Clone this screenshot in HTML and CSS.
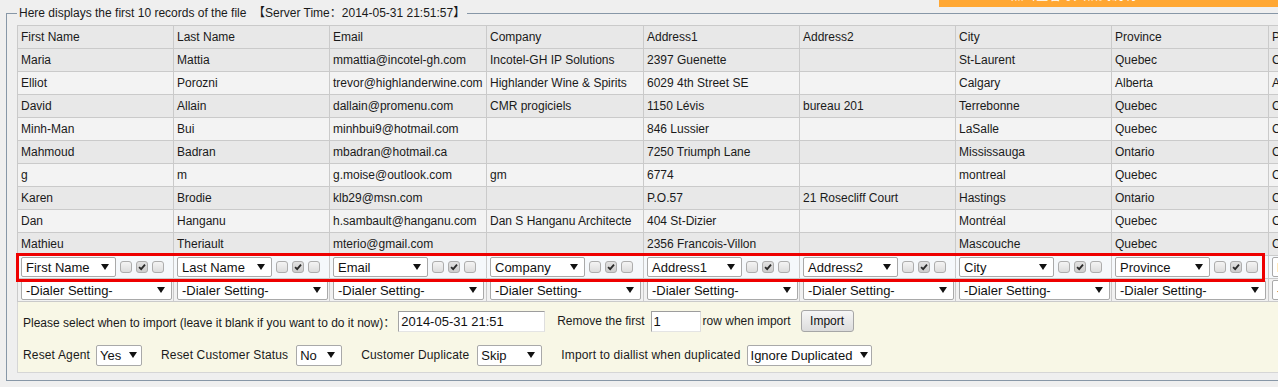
FILE: index.html
```html
<!DOCTYPE html>
<html lang="en">
  <head>
    <meta charset="UTF-8" />
    <title>Import Preview</title>
    <link rel="stylesheet" href="styles.css">
  </head>
  <body>
    <div class="help-tab"><span>点击查看导入格式说明</span></div>

    <fieldset class="preview">
      <legend>Here displays the first 10 records of the file &nbsp;【Server Time：2014-05-31 21:51:57】</legend>

      <table class="records">
        <colgroup>
          <col style="width: 156px"><col style="width: 156px"><col style="width: 157px">
          <col style="width: 157px"><col style="width: 156px"><col style="width: 156px">
          <col style="width: 156px"><col style="width: 157px"><col style="width: 157px">
        </colgroup>
        <tr class="head">
          <td>First Name</td><td>Last Name</td><td>Email</td><td>Company</td><td>Address1</td>
          <td>Address2</td><td>City</td><td>Province</td><td>Postal Code</td>
        </tr>
        <tr>
          <td>Maria</td><td>Mattia</td><td>mmattia@incotel-gh.com</td><td>Incotel-GH IP Solutions</td>
          <td>2397 Guenette</td><td></td><td>St-Laurent</td><td>Quebec</td><td>Canada</td>
        </tr>
        <tr>
          <td>Elliot</td><td>Porozni</td><td>trevor@highlanderwine.com</td><td>Highlander Wine &amp; Spirits</td>
          <td>6029 4th Street SE</td><td></td><td>Calgary</td><td>Alberta</td><td>AB</td>
        </tr>
        <tr>
          <td>David</td><td>Allain</td><td>dallain@promenu.com</td><td>CMR progiciels</td>
          <td>1150 Lévis</td><td>bureau 201</td><td>Terrebonne</td><td>Quebec</td><td>Canada</td>
        </tr>
        <tr>
          <td>Minh-Man</td><td>Bui</td><td>minhbui9@hotmail.com</td><td></td>
          <td>846 Lussier</td><td></td><td>LaSalle</td><td>Quebec</td><td>Canada</td>
        </tr>
        <tr>
          <td>Mahmoud</td><td>Badran</td><td>mbadran@hotmail.ca</td><td></td>
          <td>7250 Triumph Lane</td><td></td><td>Mississauga</td><td>Ontario</td><td>Canada</td>
        </tr>
        <tr>
          <td>g</td><td>m</td><td>g.moise@outlook.com</td><td>gm</td>
          <td>6774</td><td></td><td>montreal</td><td>Quebec</td><td>Canada</td>
        </tr>
        <tr>
          <td>Karen</td><td>Brodie</td><td>klb29@msn.com</td><td></td>
          <td>P.O.57</td><td>21 Rosecliff Court</td><td>Hastings</td><td>Ontario</td><td>Canada</td>
        </tr>
        <tr>
          <td>Dan</td><td>Hanganu</td><td>h.sambault@hanganu.com</td><td>Dan S Hanganu Architecte</td>
          <td>404 St-Dizier</td><td></td><td>Montréal</td><td>Quebec</td><td>Canada</td>
        </tr>
        <tr>
          <td>Mathieu</td><td>Theriault</td><td>mterio@gmail.com</td><td></td>
          <td>2356 Francois-Villon</td><td></td><td>Mascouche</td><td>Quebec</td><td>Canada</td>
        </tr>

        <tr class="mapping">
          <td><div class="map"><span class="sel">First Name</span><span class="chk"></span><span class="chk on"><svg viewBox="0 0 12 12"><path d="M2.5 6.2 L5 8.6 L9.6 3.2"/></svg></span><span class="chk"></span></div></td>
          <td><div class="map"><span class="sel">Last Name</span><span class="chk"></span><span class="chk on"><svg viewBox="0 0 12 12"><path d="M2.5 6.2 L5 8.6 L9.6 3.2"/></svg></span><span class="chk"></span></div></td>
          <td><div class="map"><span class="sel">Email</span><span class="chk"></span><span class="chk on"><svg viewBox="0 0 12 12"><path d="M2.5 6.2 L5 8.6 L9.6 3.2"/></svg></span><span class="chk"></span></div></td>
          <td><div class="map"><span class="sel">Company</span><span class="chk"></span><span class="chk on"><svg viewBox="0 0 12 12"><path d="M2.5 6.2 L5 8.6 L9.6 3.2"/></svg></span><span class="chk"></span></div></td>
          <td><div class="map"><span class="sel">Address1</span><span class="chk"></span><span class="chk on"><svg viewBox="0 0 12 12"><path d="M2.5 6.2 L5 8.6 L9.6 3.2"/></svg></span><span class="chk"></span></div></td>
          <td><div class="map"><span class="sel">Address2</span><span class="chk"></span><span class="chk on"><svg viewBox="0 0 12 12"><path d="M2.5 6.2 L5 8.6 L9.6 3.2"/></svg></span><span class="chk"></span></div></td>
          <td><div class="map"><span class="sel">City</span><span class="chk"></span><span class="chk on"><svg viewBox="0 0 12 12"><path d="M2.5 6.2 L5 8.6 L9.6 3.2"/></svg></span><span class="chk"></span></div></td>
          <td><div class="map"><span class="sel">Province</span><span class="chk"></span><span class="chk on"><svg viewBox="0 0 12 12"><path d="M2.5 6.2 L5 8.6 L9.6 3.2"/></svg></span><span class="chk"></span></div></td>
          <td><div class="map"><span class="sel">Postal Code</span><span class="chk"></span><span class="chk on"><svg viewBox="0 0 12 12"><path d="M2.5 6.2 L5 8.6 L9.6 3.2"/></svg></span><span class="chk"></span></div></td>
        </tr>
        <tr class="dialer">
          <td><span class="sel wide">-Dialer Setting-</span></td>
          <td><span class="sel wide">-Dialer Setting-</span></td>
          <td><span class="sel wide">-Dialer Setting-</span></td>
          <td><span class="sel wide">-Dialer Setting-</span></td>
          <td><span class="sel wide">-Dialer Setting-</span></td>
          <td><span class="sel wide">-Dialer Setting-</span></td>
          <td><span class="sel wide">-Dialer Setting-</span></td>
          <td><span class="sel wide">-Dialer Setting-</span></td>
          <td><span class="sel wide">-Dialer Setting-</span></td>
        </tr>
      </table>

      <!-- the red frame marks the column mapping row -->
      <div class="mark"></div>

      <div class="options">
        <div class="opt-row first">
          <span>Please select when to import (leave it blank if you want to do it now)：</span>
          <input class="txt date" type="text" value="2014-05-31 21:51">
          <span>Remove the first</span>
          <input class="txt skip" type="text" value="1">
          <span>row when import</span>
          <button class="import-btn">Import</button>
        </div>
        <div class="opt-row">
          <span>Reset Agent</span>
          <span class="sel small">Yes</span>
          <span>Reset Customer Status</span>
          <span class="sel small wider-gap">No</span>
          <span>Customer Duplicate</span>
          <span class="sel skip-sel">Skip</span>
          <span>Import to diallist when duplicated</span>
          <span class="sel dup-sel">Ignore Duplicated</span>
        </div>
      </div>
    </fieldset>
  </body>
</html>
```

FILE: styles.css
```css
body {
  margin: 0;
  background-color: #efefef;
  font-family: "Liberation Sans", Arial, "Noto Sans CJK SC", sans-serif;
  font-size: 12px;
  color: #1a1a1a;
  overflow: hidden;
}

.help-tab {
  position: absolute;
  top: 0;
  left: 939px;
  width: 339px;
  height: 7px;
  overflow: hidden;
  background-color: #ffa733;
}

.help-tab span {
  display: block;
  margin: -12px 0 0 72px;
  color: #fff;
  font-size: 12.5px;
  line-height: 16px;
}

.preview {
  position: relative;
  margin: 6px 0 0 6px;
  width: 1500px;
  border: 1px solid #8797a7;
  padding: 5px 10px 7px 10px;
}

.preview legend {
  padding: 0 2px;
  line-height: 14px;
}

.records {
  width: 1409px;
  border-collapse: collapse;
  table-layout: fixed;
}

.records td {
  height: 22px;
  padding: 0 3px;
  border: 1px solid #cacaca;
  background-color: #f3f3f3;
  white-space: nowrap;
  overflow: hidden;
}

.records tr:nth-child(even) td,
.records tr.head td {
  background-color: #e8e8e8;
}

.records tr.mapping td {
  background-color: #f5f8fb;
}

.records tr.dialer td {
  background-color: #f1f1f1;
}

.map {
  display: flex;
  align-items: center;
}

.sel {
  display: inline-flex;
  align-items: center;
  justify-content: space-between;
  box-sizing: border-box;
  height: 20px;
  padding: 0 6px 0 4px;
  border: 1px solid #a9a9a9;
  border-radius: 2px;
  background-color: #fff;
  font-size: 13px;
  color: #111;
  white-space: nowrap;
  vertical-align: middle;
}

.sel::after {
  content: "";
  margin-left: 8px;
  border-left: 4px solid transparent;
  border-right: 4px solid transparent;
  border-top: 6px solid #111;
}

.map .sel {
  flex: none;
  width: 95px;
}

.sel.wide {
  display: flex;
  width: 151px;
}

.chk {
  flex: none;
  box-sizing: border-box;
  width: 12px;
  height: 12px;
  margin-left: 4px;
  border: 1px solid #adadad;
  border-radius: 3px;
  background: linear-gradient(#f4f4f4, #dcdcdc);
}

.chk.on {
  background: linear-gradient(#e2e2e2, #cdcdcd);
}

.chk svg {
  display: block;
  width: 10px;
  height: 10px;
  fill: none;
  stroke: #2a2a2a;
  stroke-width: 2.2;
}

.mark {
  position: absolute;
  left: 9px;
  top: 233px;
  width: 1243px;
  height: 23px;
  border: 3px solid #ee0000;
}

.options {
  box-sizing: border-box;
  width: 1409px;
  padding: 9px 5px 7px 5px;
  border: 1px solid #d6d6d6;
  border-top: none;
  background-color: #f8f7e6;
  letter-spacing: 0.15px;
}

.opt-row {
  display: flex;
  align-items: center;
  height: 20px;
}

.opt-row.first {
  letter-spacing: 0;
}

.opt-row + .opt-row {
  margin-top: 14px;
}

.opt-row .sel {
  margin: 0 19px 0 6px;
  height: 21px;
  padding-left: 3px;
  letter-spacing: 0;
}

.opt-row .sel.wider-gap,
.opt-row .sel.skip-sel {
  margin-left: 8px;
}

.sel.small {
  width: 46px;
}

.sel.skip-sel {
  width: 65px;
}

.sel.dup-sel {
  width: 125px;
}

.txt {
  box-sizing: border-box;
  height: 21px;
  padding: 0 2px;
  border: 1px solid;
  border-color: #9d9d9d #dedede #e4e4e4 #a4a4a4;
  background-color: #fff;
  font-family: inherit;
  font-size: 13px;
  color: #111;
}

.txt.date {
  width: 147px;
  margin: 0 12px 0 3px;
}

.txt.skip {
  width: 50px;
  margin: 0 2px 0 6px;
}

.import-btn {
  width: 53px;
  height: 22px;
  margin-left: 10px;
  padding: 0;
  border: 1px solid #a6a6a6;
  border-radius: 3px;
  background: linear-gradient(#f6f6f6, #dcdcdc);
  font-family: inherit;
  font-size: 12px;
  color: #111;
}
```
